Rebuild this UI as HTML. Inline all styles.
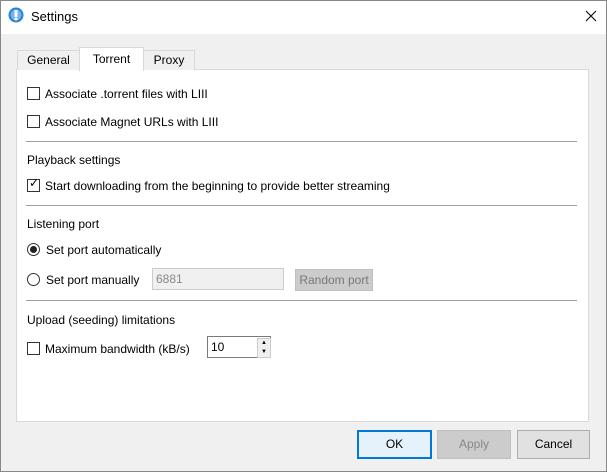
<!DOCTYPE html><html><head><style>
body{margin:0;width:607px;height:472px;background:#f0f0f0;font-family:"Liberation Sans",sans-serif;font-size:12px;color:#000;position:relative;overflow:hidden}
.a{position:absolute;white-space:nowrap}
.cb{position:absolute;width:11px;height:11px;border:1px solid #333;background:#fff}
.rb{position:absolute;width:11px;height:11px;border:1px solid #333;border-radius:50%;background:#fff}
.hr{position:absolute;left:26px;width:551px;height:1px;background:#a0a0a0}
.btn{position:absolute;top:430px;height:27px;border:1px solid #adadad;background:#e1e1e1;text-align:center;line-height:27px}
</style></head><body>
<div class="a" style="left:0;top:0;width:605px;height:33px;background:#fff;border:1px solid #888;border-bottom:none"></div>
<div class="a" style="left:0;top:0;width:605px;height:470px;border:1px solid #888"></div>
<svg class="a" style="left:8px;top:7px" width="16" height="16"><circle cx="8" cy="8" r="7.5" fill="#2a7fd4"/><circle cx="8" cy="8" r="5.5" fill="#6fb4f0"/><rect x="6.5" y="3" width="3" height="7" fill="#fff"/><circle cx="8" cy="12" r="1.5" fill="#fff"/></svg>
<div class="a" style="left:31px;top:9px;font-size:13px">Settings</div>
<svg class="a" style="left:585px;top:10px" width="12" height="12"><path d="M1 1L11 11M11 1L1 11" stroke="#111" stroke-width="1.2"/></svg>
<div class="a" style="left:16px;top:69px;width:571px;height:351px;background:#fff;border:1px solid #d9d9d9"></div>
<div class="a" style="left:17px;top:50px;width:61px;height:19px;border:1px solid #d9d9d9;border-bottom:none;background:#f0f0f0;text-align:center;line-height:19px">General</div>
<div class="a" style="left:143px;top:50px;width:50px;height:19px;border:1px solid #d9d9d9;border-bottom:none;background:#f0f0f0;text-align:center;line-height:19px">Proxy</div>
<div class="a" style="left:79px;top:47px;width:63px;height:23px;border:1px solid #d9d9d9;border-bottom:none;background:#fff;text-align:center;line-height:22px">Torrent</div>
<div class="cb" style="left:27px;top:87px"></div><div class="a" style="left:45px;top:87px">Associate .torrent files with LIII</div>
<div class="cb" style="left:27px;top:115px"></div><div class="a" style="left:45px;top:115px">Associate Magnet URLs with LIII</div>
<div class="hr" style="top:141px"></div>
<div class="a" style="left:27px;top:153px">Playback settings</div>
<div class="cb" style="left:27px;top:179px"></div><div class="a" style="left:29px;top:176px;font-size:12px">✓</div><div class="a" style="left:45px;top:179px">Start downloading from the beginning to provide better streaming</div>
<div class="hr" style="top:205px"></div>
<div class="a" style="left:27px;top:217px">Listening port</div>
<div class="rb" style="left:27px;top:243px"></div><div class="a" style="left:30px;top:246px;width:7px;height:7px;border-radius:50%;background:#222"></div><div class="a" style="left:46px;top:243px">Set port automatically</div>
<div class="rb" style="left:27px;top:273px"></div><div class="a" style="left:46px;top:273px">Set port manually</div>
<div class="a" style="left:152px;top:268px;border:1px solid #ccc;background:#f0f0f0;color:#888;line-height:20px;padding-left:3px;box-sizing:border-box;width:132px;height:22px">6881</div>
<div class="a" style="left:295px;top:269px;width:76px;height:20px;background:#ccc;border:1px solid #bfbfbf;color:#777;text-align:center;line-height:20px">Random port</div>
<div class="hr" style="top:300px"></div>
<div class="a" style="left:27px;top:313px">Upload (seeding) limitations</div>
<div class="cb" style="left:27px;top:342px"></div><div class="a" style="left:45px;top:342px">Maximum bandwidth (kB/s)</div>
<div class="a" style="left:207px;top:336px;width:64px;height:22px;border:1px solid #7a7a7a;background:#fff;box-sizing:border-box;line-height:20px;padding-left:3px">10</div>
<div class="a" style="left:257px;top:338px;width:12px;height:18px;border:1px solid #ccc;background:#f0f0f0;font-size:6px;line-height:9px;text-align:center">▲<br>▼</div>
<div class="btn" style="left:357px;width:71px;border:2px solid #0078d7;height:25px;line-height:25px;background:#e5f1fb">OK</div>
<div class="btn" style="left:437px;width:72px;background:#ccc;border-color:#bfbfbf;color:#888">Apply</div>
<div class="btn" style="left:517px;width:71px">Cancel</div>
</body></html>
